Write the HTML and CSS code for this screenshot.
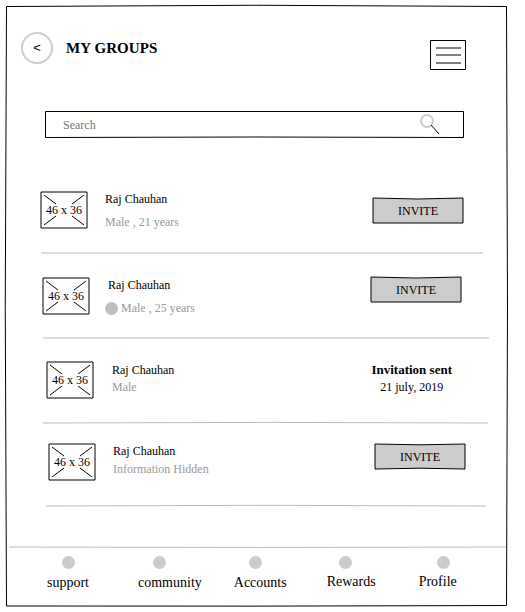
FILE: index.html
```html
<!DOCTYPE html>
<html lang="en">
<head>
<meta charset="utf-8">
<title>My Groups</title>
<link rel="stylesheet" href="styles.css">
</head>
<body>
<svg width="0" height="0" class="defs">
  <symbol id="placeholder" viewBox="0 0 48 38">
    <path d="M1 1H47V37H1Z" fill="none" stroke="#000"/>
    <path d="M4 4L16 13M32 13L44 4M4 34L16 25M32 25L44 34" fill="none" stroke="#000"/>
  </symbol>
  <symbol id="button-shape" viewBox="0 0 92 27">
    <path d="M1 1Q46 3 91 1V26H1Z" fill="#ccc" stroke="#000"/>
  </symbol>
</svg>
<div class="screen">
  <svg class="frame" width="525" height="612" viewBox="0 0 525 612" fill="none" stroke="#000">
    <path d="M6.5 6.5Q256 4 506.5 6.5Q508.5 306 506.5 605.5Q256 606.5 6.5 606Q4 306 6.5 6.5Z"/>
  </svg>
  <header class="header">
    <button class="back">&lt;</button>
    <h1 class="title">MY GROUPS</h1>
    <button class="menu" aria-label="Menu"><svg width="36" height="30" viewBox="0 0 36 30" fill="none" stroke="#000"><path d="M.5 .5H35.5V29.5H.5Z"/><path d="M6 8H31M6 15H31M6 23H31"/></svg></button>
  </header>
  <div class="search">
    <svg class="search-outline" width="419" height="28" viewBox="0 0 419 28" fill="none" stroke="#000"><path d="M.5 .5H418.5V26.5Q209 25.5 .5 26.5Z"/></svg>
    <span class="search-text">Search</span>
    <svg class="search-icon" width="22" height="22" viewBox="0 0 22 22" fill="none"><circle cx="8" cy="8" r="6" stroke="#ccc" stroke-width="2"/><path d="M12 12L20 21" stroke="#000"/></svg>
  </div>
  <main class="list">
    <section class="row row-first">
      <div class="thumb"><svg width="48" height="38"><use href="#placeholder"/></svg><span>46 x 36</span></div>
      <div class="info"><p class="name">Raj Chauhan</p><p class="detail">Male , 21 years</p></div>
      <button class="invite"><svg width="92" height="27"><use href="#button-shape"/></svg><span>INVITE</span></button>
    </section>
    <svg class="rule rule-first" width="442" height="2" viewBox="0 0 442 2"><path d="M0 1H442" stroke="#bbb"/></svg>
    <section class="row row-second">
      <div class="thumb"><svg width="48" height="38"><use href="#placeholder"/></svg><span>46 x 36</span></div>
      <div class="info"><p class="name">Raj Chauhan</p><p class="detail"><i class="dot"></i>Male , 25 years</p></div>
      <button class="invite"><svg width="92" height="27"><use href="#button-shape"/></svg><span>INVITE</span></button>
    </section>
    <svg class="rule rule-second" width="446" height="2" viewBox="0 0 446 2"><path d="M0 1H446" stroke="#bbb"/></svg>
    <section class="row row-third">
      <div class="thumb"><svg width="48" height="38"><use href="#placeholder"/></svg><span>46 x 36</span></div>
      <div class="info"><p class="name">Raj Chauhan</p><p class="detail">Male</p></div>
      <div class="sent"><strong>Invitation sent</strong><span>21 july, 2019</span></div>
    </section>
    <svg class="rule rule-third" width="445" height="3" viewBox="0 0 445 3"><path d="M0 2Q222 .8 445 2" fill="none" stroke="#bbb"/></svg>
    <section class="row row-fourth">
      <div class="thumb"><svg width="48" height="38"><use href="#placeholder"/></svg><span>46 x 36</span></div>
      <div class="info"><p class="name">Raj Chauhan</p><p class="detail">Information Hidden</p></div>
      <button class="invite"><svg width="92" height="27" viewBox="0 0 92 27"><path d="M1 1Q46 2.6 91 1V26Q46 24.4 1 26Z" fill="#ccc" stroke="#000"/></svg><span>INVITE</span></button>
    </section>
    <svg class="rule rule-fourth" width="440" height="3" viewBox="0 0 440 3"><path d="M0 2Q220 .6 440 2" fill="none" stroke="#bbb"/></svg>
  </main>
  <footer>
    <svg class="rule rule-nav" width="497" height="3" viewBox="0 0 497 3"><path d="M0 1Q248 2 497 1" fill="none" stroke="#bbb"/></svg>
    <nav class="nav">
      <a class="tab"><i class="bullet"></i>support</a>
      <a class="tab tab-community"><i class="bullet"></i>community</a>
      <a class="tab tab-accounts"><i class="bullet"></i>Accounts</a>
      <a class="tab tab-rewards"><i class="bullet"></i>Rewards</a>
      <a class="tab tab-profile"><i class="bullet"></i>Profile</a>
    </nav>
  </footer>
</div>
</body>
</html>
```
FILE: styles.css
```css
* { box-sizing: border-box; }
body { margin: 0; background: #fff; }
svg { display: block; }
p, h1 { margin: 0; }
button { padding: 0; border: 0; background: none; color: inherit; font: inherit; }
.defs { position: absolute; }
.screen {
  position: relative;
  width: 525px;
  height: 612px;
  overflow: hidden;
  font: 12px/14px "Liberation Serif", "Times New Roman", serif;
  color: #000;
}
.frame { position: absolute; inset: 0; pointer-events: none; }

.header { display: flex; align-items: center; height: 80px; padding: 32px 59px 16px 21px; }
.back {
  width: 32px;
  height: 32px;
  border: 2px solid #ccc;
  border-radius: 50%;
  font: 13px/26px "Liberation Sans", Arial, sans-serif;
}
.title { margin-left: 13px; font-size: 15px; line-height: 18px; letter-spacing: .07px; }
.menu { margin: 14px 0 0 auto; }

.search { display: grid; grid-template-columns: 375px 1fr; width: 419px; height: 28px; margin: 31px 0 0 45px; }
.search > * { grid-row: 1; }
.search-outline { grid-column: 1 / -1; }
.search-text { grid-column: 1; padding: 7px 0 0 18px; color: #757575; }
.search-icon { grid-column: 2; margin: 2px 0 0 -1px; }

.row { display: flex; align-items: flex-start; }
.row-first { height: 113px; padding: 52px 61px 0 40px; }
.row-second { height: 83px; padding: 23px 63px 0 42px; }
.row-third { height: 82px; padding: 22px 73px 0 46px; }
.row-fourth { height: 80px; padding: 19px 59px 0 48px; }
.thumb, .invite { display: grid; place-items: center; }
.thumb > *, .invite > * { grid-area: 1 / 1; }
.info { margin: 1px 0 0 17px; }
.row-first .detail { margin-top: 9px; }
.row-second .info { margin-left: 15px; }
.row-second .name { margin-left: 3px; }
.row-second .detail { display: flex; margin-top: 9px; }
.row-third .info { margin: 2px 0 0 18px; }
.row-third .detail { margin-top: 3px; }
.row-fourth .detail { margin-top: 4px; }
.detail { color: #999; }
.dot { width: 13px; height: 13px; margin: 1px 3px 0 0; border-radius: 50%; background: #bfbfbf; }
.invite { margin-left: auto; }
.row-first .invite { margin-top: 6px; }
.row-second .invite { margin-top: -1px; }
.sent { display: flex; flex-direction: column; align-items: center; margin: 1px 0 0 auto; }
.sent strong { font-size: 13px; line-height: 16px; }
.sent span { margin-top: 2px; }

.rule-first { margin-left: 41px; }
.rule-second { margin-left: 43px; }
.rule-third { margin-left: 43px; }
.rule-fourth { margin-left: 46px; }
.rule-nav { margin: 39px 0 0 9px; }

.nav { display: flex; gap: 32px; padding: 7px 0 0 47px; font-size: 14px; line-height: 16px; }
.tab { display: flex; flex-direction: column; gap: 6px; }
.tab-community { margin-left: 17px; }
.tab-rewards, .tab-profile { gap: 5px; margin-left: 8px; }
.tab-profile { margin-left: 11px; }
.bullet { width: 13px; height: 13px; margin-left: 15px; border-radius: 50%; background: #ccc; }
.tab-rewards .bullet { margin-left: 12px; }
.tab-profile .bullet { margin-left: 18px; }
```
